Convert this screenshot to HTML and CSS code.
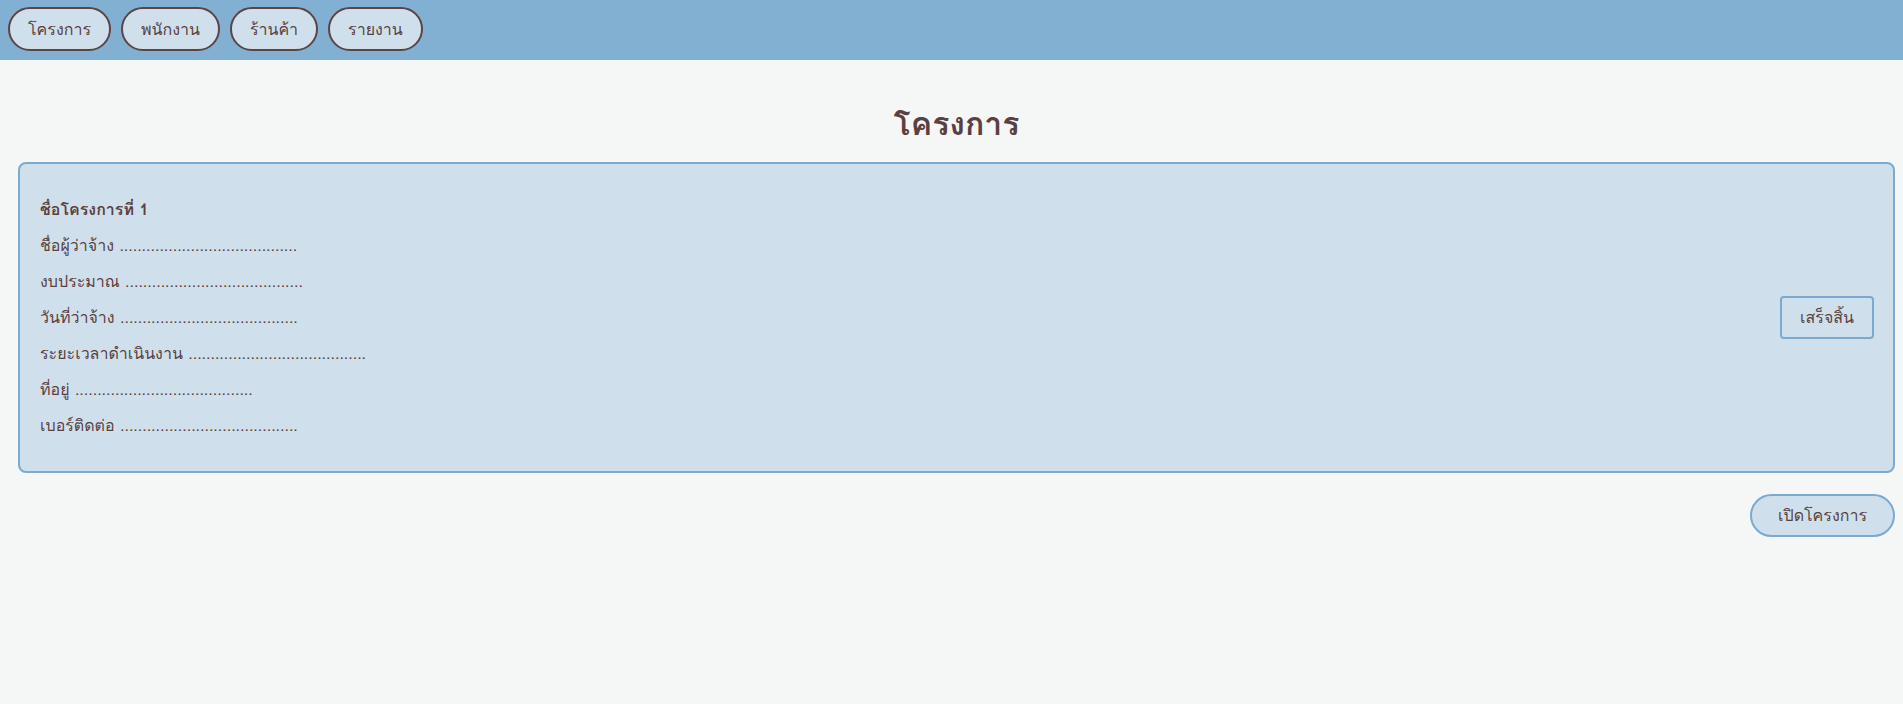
FILE: index.html
```html
<!DOCTYPE html>
<html lang="th">
<head>
<meta charset="utf-8">
<title>โครงการ</title>
<link rel="stylesheet" href="styles.css">
</head>
<body>
<nav class="topbar">
  <button class="nav-btn">โครงการ</button>
  <button class="nav-btn">พนักงาน</button>
  <button class="nav-btn">ร้านค้า</button>
  <button class="nav-btn">รายงาน</button>
</nav>
<main class="content">
  <h1 class="page-title">โครงการ</h1>
  <section class="project-card">
    <div class="project-info">
      <p class="info-line info-title">ชื่อโครงการที่ 1</p>
      <p class="info-line">ชื่อผู้ว่าจ้าง ........................................</p>
      <p class="info-line">งบประมาณ ........................................</p>
      <p class="info-line">วันที่ว่าจ้าง ........................................</p>
      <p class="info-line">ระยะเวลาดำเนินงาน ........................................</p>
      <p class="info-line">ที่อยู่ ........................................</p>
      <p class="info-line">เบอร์ติดต่อ ........................................</p>
    </div>
    <button class="done-btn">เสร็จสิ้น</button>
  </section>
  <div class="actions">
    <button class="open-btn">เปิดโครงการ</button>
  </div>
</main>
</body>
</html>
```
FILE: styles.css
```css
html, body {
  margin: 0;
  padding: 0;
}
body {
  background: #f5f7f6;
  color: #5a4040;
  font-family: Tahoma, Loma, "Noto Sans Thai Looped", Garuda, Waree, "Noto Sans Thai", "Noto Sans", sans-serif;
  font-size: 16px;
}
button {
  font-family: inherit;
  color: #5a4040;
  cursor: pointer;
}
.topbar {
  background: #82b0d2;
  height: 60px;
  box-sizing: border-box;
  padding: 7px 8px;
  display: flex;
  gap: 10px;
}
.nav-btn {
  height: 44px;
  padding: 0 18px;
  background: #cfe0ec;
  border: 2px solid #5a4444;
  border-radius: 22px;
  font-size: 16px;
}
.content {
  padding: 0 8px 0 18px;
}
.page-title {
  margin: 0;
  padding-top: 44px;
  height: 102px;
  box-sizing: border-box;
  text-align: center;
  font-size: 32px;
  font-weight: bold;
  color: #5a4040;
  line-height: 40px;
}
.project-card {
  background: #cfe0ec;
  border: 2px solid #7aaad0;
  border-radius: 8px;
  height: 311px;
  box-sizing: border-box;
  padding: 0 19px 0 20px;
  display: flex;
  align-items: center;
  justify-content: space-between;
}
.project-info {
  display: flex;
  flex-direction: column;
  gap: 17px;
}
.info-line {
  margin: 0;
  line-height: 19px;
  font-size: 16px;
}
.info-title {
  font-weight: bold;
}
.done-btn {
  width: 94px;
  height: 43px;
  background: #cfe0ec;
  border: 2px solid #7aaad0;
  border-radius: 4px;
  font-size: 16px;
}
.actions {
  display: flex;
  justify-content: flex-end;
  padding-top: 21px;
}
.open-btn {
  width: 145px;
  height: 43px;
  background: #cfe0ec;
  border: 2px solid #7aaad0;
  border-radius: 22px;
  font-size: 16px;
}
```
